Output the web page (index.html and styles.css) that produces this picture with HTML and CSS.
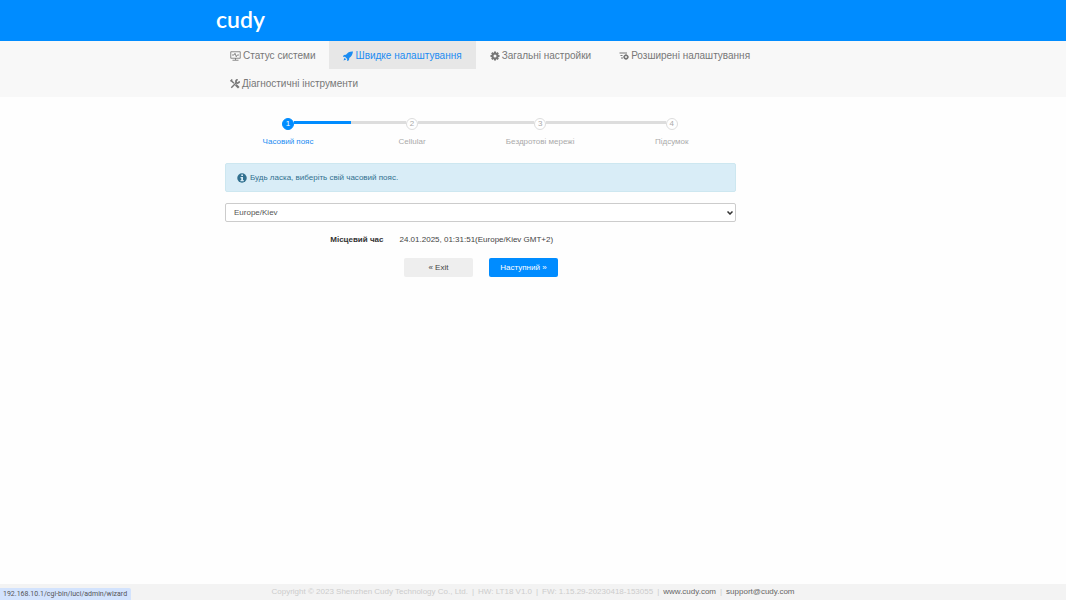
FILE: index.html
```html
<!DOCTYPE html>
<html lang="uk">
<head>
<meta charset="utf-8">
<title>Cudy</title>
<link rel="stylesheet" href="styles.css">
</head>
<body>
<header class="topbar">
  <div class="container"><a class="logo" href="#">cudy</a></div>
</header>
<nav class="menu">
  <div class="container menu-list">
    <a class="menu-item" href="#">
      <svg class="icon icon-wide" viewBox="0 0 22 20" fill="none" stroke="currentColor" stroke-width="1.7"><path d="M1.500 1.500h19v13h-19zM11 14v4M5 18.500h12M4 8h4l2-3.500 2.500 7 2-3.500H18"/></svg>
      Статус системи</a>
    <a class="menu-item active" href="#">
      <svg class="icon" viewBox="0 0 20 20" fill="currentColor"><path d="M20 1C14 .5 9 3 6 7.500L1.500 8 0 12l4-.5L8.500 16 8 20l4-1.500.5-4.500C17 11 19.500 6 20 1z"/><path d="M3 13.500l3.500 3.500L1 19z"/></svg>
      Швидке налаштування</a>
    <a class="menu-item" href="#">
      <svg class="icon" viewBox="0 0 20 20"><g stroke="currentColor" stroke-width="4"><path d="M10 1v18M1 10h18M3.600 3.600l12.800 12.800M16.400 3.600L3.600 16.400"/></g><circle cx="10" cy="10" r="5" fill="none" stroke="currentColor" stroke-width="4"/><circle cx="10" cy="10" r="3" fill="#f8f8f8"/></svg>
      Загальні настройки</a>
    <a class="menu-item" href="#">
      <svg class="icon" viewBox="0 0 20 20" fill="none" stroke="currentColor" stroke-width="2.200"><path d="M1 4h15M3 9h4M4 14h4"/><circle cx="14" cy="12" r="3.500" stroke-width="3"/><path d="M14 6.500v2M14 15.500v2M8.500 12h2M17.500 12h2"/></svg>
      Розширені налаштування</a>
    <a class="menu-item" href="#">
      <svg class="icon" viewBox="0 0 20 20" fill="none" stroke="currentColor"><path stroke-width="3" d="M2 3l6 5.500"/><path stroke-width="4.500" d="M11.500 11.500l6 6"/><path stroke-width="3" d="M2.500 17.500L13 7"/><path stroke-width="3.500" d="M18.500 4.500a3.300 3.300 0 1 1-3-3"/><path stroke-width="3" d="M1 4.500L4.500 1"/></svg>
      Діагностичні інструменти</a>
  </div>
</nav>
<main class="container content">
  <div class="wizard">
    <ol class="steps">
      <li class="step current"><span class="dot">1</span><span>Часовий пояс</span></li>
      <li class="step"><span class="dot">2</span><span>Cellular</span></li>
      <li class="step"><span class="dot">3</span><span>Бездротові мережі</span></li>
      <li class="step"><span class="dot">4</span><span>Підсумок</span></li>
    </ol>
    <p class="notice">
      <svg class="icon" viewBox="0 0 20 20"><circle cx="10" cy="10" r="9.500" fill="currentColor"/><path fill="#d9edf7" d="M8.500 3h3.500v3H8.500zM7 8h5v6h1.500v2.500H7V14h1.500v-3.500H7z"/></svg>
      Будь ласка, виберіть свій часовий пояс.</p>
    <form class="form">
      <div class="zone-box">
        <select class="zone" aria-label="Часовий пояс"><option>Europe/Kiev</option></select>
        <svg class="chevron" viewBox="0 0 6 4" fill="none" stroke="#333" stroke-width="1.500"><path d="M.5.5L3 3 5.500.5"/></svg>
      </div>
      <div class="row">
        <span class="row-label">Місцевий час</span>
        <output>24.01.2025, 01:31:51(Europe/Kiev GMT+2)</output>
      </div>
      <div class="actions">
        <button class="btn" type="button">« Exit</button>
        <button class="btn btn-primary" type="button">Наступний »</button>
      </div>
    </form>
  </div>
</main>
<footer class="footer">
  <span>Copyright © 2023 Shenzhen Cudy Technology Co., Ltd.</span>
  <span>|</span><span>HW: LT18 V1.0</span>
  <span>|</span><span>FW: 1.15.29-20230418-153055</span>
  <span>|</span><a href="#">www.cudy.com</a>
  <span>|</span><a href="#">support@cudy.com</a>
</footer>
<div class="status-url">192.168.10.1/cgi-bin/luci/admin/wizard</div>
</body>
</html>
```

FILE: styles.css
```css
* { box-sizing: border-box; }
body {
  margin: 0;
  min-height: 100vh;
  display: flex;
  flex-direction: column;
  background: #fefefe;
  color: #444;
  font: 8px/12px "Liberation Sans", Arial, sans-serif;
}
a { color: inherit; text-decoration: none; }
.container { width: 100%; max-width: 650px; margin: 0 auto; padding: 0 8px; }
.topbar { background: #008cff; height: 41px; }
.logo {
  display: inline-block;
  color: #fff;
  font: 600 23px/38px Lato, sans-serif;
}
.menu { background: #f8f8f8; }
.menu-list { display: flex; flex-wrap: wrap; }
.menu-item {
  display: flex;
  align-items: center;
  gap: 2px;
  height: 28px;
  padding: 2px 14px 0;
  color: #777;
  font-size: 10px;
}
.menu-item.active { background: #e7e7e7; color: #1b8cf2; }
.icon { width: 10px; height: 10px; flex: none; }
.icon-wide { width: 11px; }
.content { flex: 1; padding: 0 17px; }
.wizard { width: 83%; }
.steps {
  display: grid;
  grid-template-columns: 126fr 122fr 134fr 129fr;
  list-style: none;
  margin: 0;
  padding: 21px 0 15px;
  color: #aaa;
}
.step {
  display: grid;
  grid-template-columns: 1fr auto 1fr;
  align-items: center;
  row-gap: 6px;
  text-align: center;
}
.step::before, .step::after { content: ""; height: 3px; margin-bottom: 3px; background: #ddd; grid-row: 1; }
.step::before { grid-column: 1; }
.step::after { grid-column: 3; }
.step:first-child::before, .step:last-child::after { background: none; }
.step.current { color: #1b8cf2; }
.step.current::after { background: #008cff; }
.dot {
  grid-column: 2;
  grid-row: 1;
  width: 12px;
  height: 12px;
  border: 1px solid #ddd;
  border-radius: 50%;
  background: #fff;
  line-height: 10px;
}
.current .dot { background: #008cff; border-color: #008cff; color: #fff; }
.step span:last-child { grid-column: 1 / -1; }
.notice {
  display: flex;
  align-items: center;
  gap: 3px;
  height: 29px;
  margin: 0 0 11px;
  padding: 0 11px;
  border: 1px solid #cde7f0;
  border-radius: 2px;
  background: #d9edf7;
  color: #31708f;
}
.zone-box { position: relative; }
.zone {
  appearance: none;
  display: block;
  width: 100%;
  height: 19px;
  padding: 0 8px;
  border: 1px solid #ccc;
  border-radius: 2px;
  background: #fff;
  color: #555;
  font: inherit;
}
.chevron {
  position: absolute;
  right: 3px;
  top: 8px;
  width: 6px;
  height: 4px;
  pointer-events: none;
}
.row { display: flex; gap: 16px; margin-top: 12px; }
.row-label { width: 31%; text-align: right; font-weight: bold; color: #333; }
.actions { display: flex; gap: 16px; margin-top: 12px; padding-left: 35%; }
.btn {
  width: 69px;
  height: 19px;
  padding: 0;
  border: 0;
  border-radius: 2px;
  background: #eee;
  color: #444;
  font: inherit;
}
.btn-primary { background: #008cff; color: #fff; }
.footer {
  display: flex;
  justify-content: center;
  gap: 4px;
  height: 16px;
  background: #f3f3f3;
  color: #ccc;
  line-height: 16px;
}
.footer a { color: #666; }
.status-url {
  position: fixed;
  left: 0;
  bottom: 0;
  height: 12px;
  padding: 0 4px 0 3px;
  border-top-right-radius: 2px;
  background: #d3e3fd;
  color: #555;
  font: 7px/12px Roboto, sans-serif;
}
```
